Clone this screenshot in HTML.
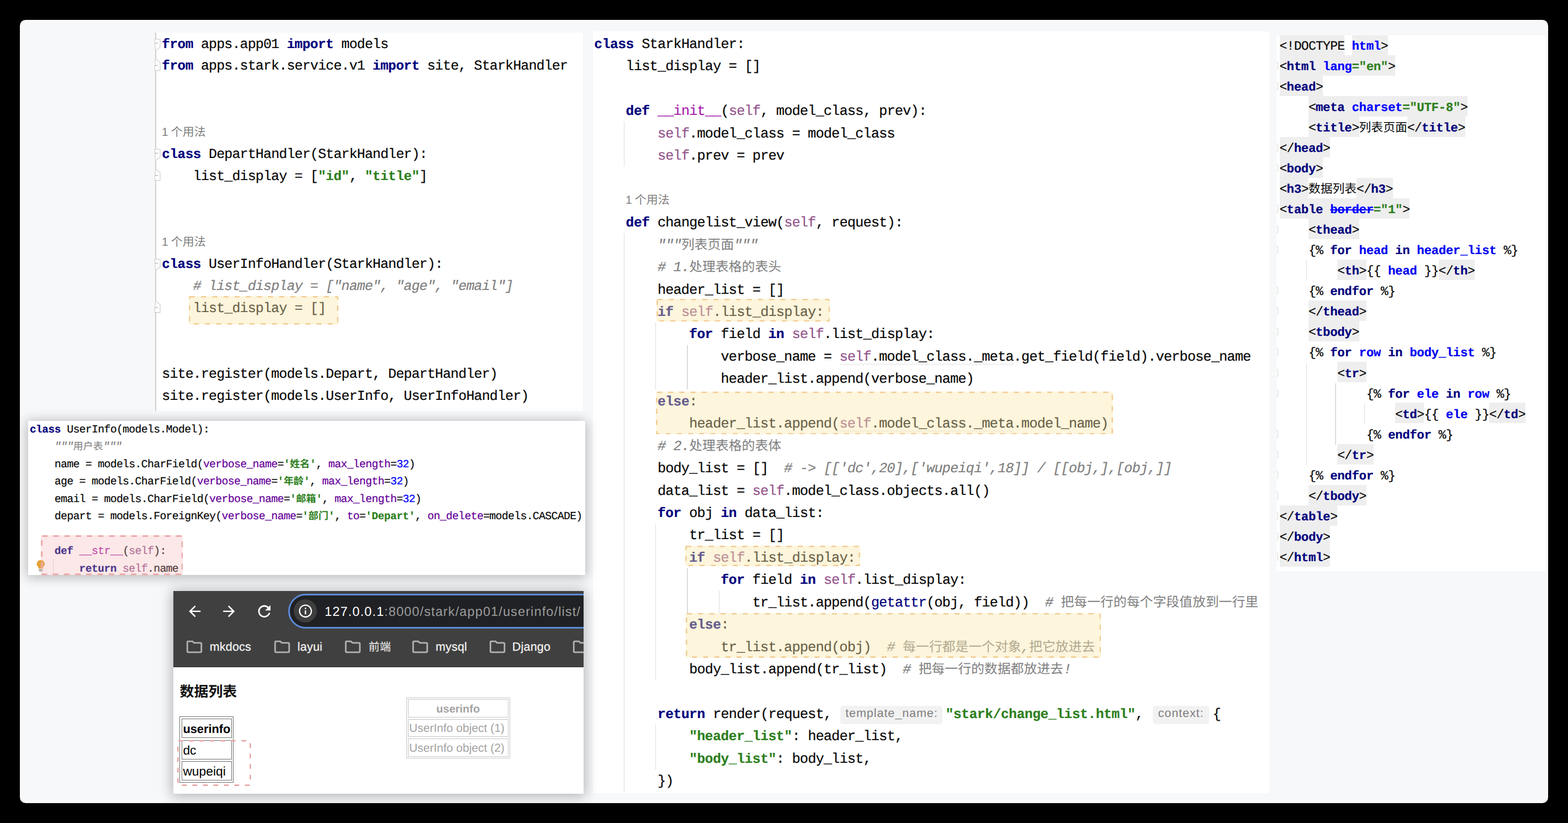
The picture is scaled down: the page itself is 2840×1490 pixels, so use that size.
<!DOCTYPE html>
<html lang="en"><head><meta charset="utf-8"><title>stark</title>
<style>
html,body{margin:0;padding:0;font-family:"Liberation Sans",sans-serif}
*{text-rendering:geometricPrecision}
body{width:2840px;height:1490px;background:#000;position:relative;overflow:hidden;font-family:"Liberation Mono",monospace}
.ln{position:absolute;white-space:pre;color:#080808;font-family:"Liberation Mono",monospace;-webkit-text-stroke:0.22px}
.cj{display:inline-block;position:relative;letter-spacing:0;text-align:center;font-style:normal;font-weight:normal;overflow:visible;white-space:nowrap;vertical-align:baseline;height:1em;line-height:1em;font-family:"Liberation Sans","Noto Sans CJK SC",sans-serif;-webkit-text-stroke:0}
.cjb{font-weight:bold}
.k{color:#00007c;font-weight:bold}
.s{color:#2d7f1d;font-weight:bold}
.c{color:#808080;font-style:italic}
.sf{color:#94558d}
.m{color:#a81eae}
.b{color:#00007c}
.pa{color:#660099}
.n{color:#0000ff}
.t{color:#00007c;font-weight:bold}
.a{color:#0000ff;font-weight:bold}
.v{color:#2d7f1d;font-weight:bold}
.dk{color:#00007c;font-weight:bold}
.dv{color:#0000f0;font-weight:bold}
.st{text-decoration:line-through}
.gb{position:absolute;background:#eeeeee}
.wv{text-decoration:underline wavy #d8d8d8 1px;text-underline-offset:4px}
.hint{position:absolute;white-space:nowrap;color:#7f7f7f;font-family:"Liberation Sans","Noto Sans CJK SC",sans-serif;line-height:30px;height:30px}
.hint span{display:inline-block}
.hint .hs{width:0.24em}
.hint .hc{width:1.0em;text-align:center}
.inl{display:inline-block;box-sizing:border-box;font-family:"Liberation Sans",sans-serif;font-size:21.5px;letter-spacing:0.95px;color:#7e7e7e;background:#f2f2f2;border-radius:5px;height:33px;line-height:33px;text-align:center;margin:0 7px 0 4px;vertical-align:baseline;position:relative;top:1px;-webkit-text-stroke:0}
.p1{font-size:25.0px;letter-spacing:-0.872px;line-height:40px;height:40px}
.p1 .a,.p1 .dk,.p1 .dv,.p1 .k,.p1 .s,.p1 .t,.p1 .v{font-size:24.3px;letter-spacing:-0.452px}
.p1 .cj{width:23.4px;font-size:23.4px}
.p2{font-size:25.4px;letter-spacing:-0.912px;line-height:40px;height:40px}
.p2 .a,.p2 .dk,.p2 .dv,.p2 .k,.p2 .s,.p2 .t,.p2 .v{font-size:24.69px;letter-spacing:-0.486px}
.p2 .cj{width:23.85px;font-size:23.85px}
.p3{font-size:23.1px;letter-spacing:-0.762px;line-height:37px;height:37px}
.p3 .a,.p3 .dk,.p3 .dv,.p3 .k,.p3 .s,.p3 .t,.p3 .v{font-size:22.45px;letter-spacing:-0.372px}
.p3 .cj{width:21.8px;font-size:21.8px}
.p4{font-size:19.9px;letter-spacing:-0.722px;line-height:32px;height:32px}
.p4 .a,.p4 .dk,.p4 .dv,.p4 .k,.p4 .s,.p4 .t,.p4 .v{font-size:19.34px;letter-spacing:-0.386px}
.p4 .cj{width:18.1px;font-size:18.1px}
</style></head>
<body>
<div style="position:absolute;left:36.00px;top:36.00px;width:2768.00px;height:1417.80px;background:#f7f8fa;border-radius:10.5px"></div>
<div style="position:absolute;left:280.50px;top:59.20px;width:775.30px;height:685.20px;background:#fff"></div>
<div style="position:absolute;left:281.20px;top:59.20px;width:1.80px;height:685.20px;background:#cfcfcf"></div>
<div class="ln p1" style="left:293.30px;top:60.56px"><span class="k">from</span> apps.app01 <span class="k">import</span> models</div>
<div class="ln p1" style="left:293.30px;top:100.40px"><span class="k">from</span> apps.stark.service.v1 <span class="k">import</span> site, StarkHandler</div>
<div class="ln p1" style="left:293.30px;top:259.76px"><span class="k">class</span> DepartHandler(StarkHandler):</div>
<div class="ln p1" style="left:293.30px;top:299.60px">    list_display = [<span class="s">"id"</span>, <span class="s">"title"</span>]</div>
<div class="ln p1" style="left:293.30px;top:458.96px"><span class="k">class</span> UserInfoHandler(StarkHandler):</div>
<div class="ln p1" style="left:293.30px;top:498.80px">    <span class="c"># list_display = ["name", "age", "email"]</span></div>
<div class="ln p1" style="left:293.30px;top:538.64px">    list_display = []</div>
<div class="ln p1" style="left:293.30px;top:658.16px">site.register(models.Depart, DepartHandler)</div>
<div class="ln p1" style="left:293.30px;top:698.00px">site.register(models.UserInfo, UserInfoHandler)</div>
<div class="hint" style="left:293.00px;top:224.50px;font-size:21px"><span>1</span><span class="hs"></span><span class="hc cj cjs">个</span><span class="hc cj cjs">用</span><span class="hc cj cjs">法</span></div>
<div class="hint" style="left:293.00px;top:423.50px;font-size:21px"><span>1</span><span class="hs"></span><span class="hc cj cjs">个</span><span class="hc cj cjs">用</span><span class="hc cj cjs">法</span></div>
<svg style="position:absolute;left:0;top:0;z-index:2" width="300" height="760" viewBox="0 0 300 760"><path d="M280.10 70.96 H290.00 V84.66 L281.60 92.36 Z" fill="#fff" stroke="#d2d2d2" stroke-width="1.3"/><path d="M280.60 78.16 H286.20" stroke="#b9b9b9" stroke-width="1.4"/></svg>
<svg style="position:absolute;left:0;top:0;z-index:2" width="300" height="760" viewBox="0 0 300 760"><path d="M280.10 270.16 H290.00 V283.86 L281.60 291.56 Z" fill="#fff" stroke="#d2d2d2" stroke-width="1.3"/><path d="M280.60 277.36 H286.20" stroke="#b9b9b9" stroke-width="1.4"/></svg>
<svg style="position:absolute;left:0;top:0;z-index:2" width="300" height="760" viewBox="0 0 300 760"><path d="M280.10 469.36 H290.00 V483.06 L281.60 490.76 Z" fill="#fff" stroke="#d2d2d2" stroke-width="1.3"/><path d="M280.60 476.56 H286.20" stroke="#b9b9b9" stroke-width="1.4"/></svg>
<svg style="position:absolute;left:0;top:0;z-index:2" width="300" height="760" viewBox="0 0 300 760"><path d="M281.60 106.00 L290.00 113.50 V127.50 H280.10 Z" fill="#fff" stroke="#d2d2d2" stroke-width="1.3"/><path d="M280.60 118.50 H286.20" stroke="#b9b9b9" stroke-width="1.4"/></svg>
<svg style="position:absolute;left:0;top:0;z-index:2" width="300" height="760" viewBox="0 0 300 760"><path d="M281.60 305.20 L290.00 312.70 V326.70 H280.10 Z" fill="#fff" stroke="#d2d2d2" stroke-width="1.3"/><path d="M280.60 317.70 H286.20" stroke="#b9b9b9" stroke-width="1.4"/></svg>
<svg style="position:absolute;left:0;top:0;z-index:2" width="300" height="760" viewBox="0 0 300 760"><path d="M281.60 544.24 L290.00 551.74 V565.74 H280.10 Z" fill="#fff" stroke="#d2d2d2" stroke-width="1.3"/><path d="M280.60 556.74 H286.20" stroke="#b9b9b9" stroke-width="1.4"/></svg>
<svg style="position:absolute;left:342.00px;top:536.00px;z-index:5" width="271.00" height="51.50" viewBox="0 0 271.00 51.50"><rect x="0" y="0" width="271.00" height="51.50" fill="rgba(250,230,168,0.40)"/><rect x="1.30" y="1.30" width="268.40" height="48.90" rx="2" fill="none" stroke="#f1cd93" stroke-width="2.6" stroke-dasharray="6.8 13.4" stroke-linecap="round"/></svg>
<div style="position:absolute;left:1073.60px;top:57.40px;width:1225.40px;height:1378.50px;background:#fff"></div>
<div class="ln p2" style="left:1076.30px;top:60.75px"><span class="k">class</span> StarkHandler:</div>
<div class="ln p2" style="left:1076.30px;top:101.19px">    list_display = []</div>
<div class="ln p2" style="left:1076.30px;top:182.07px">    <span class="k">def</span> <span class="m">__init__</span>(<span class="sf">self</span>, model_class, prev):</div>
<div class="ln p2" style="left:1076.30px;top:222.51px">        <span class="sf">self</span>.model_class = model_class</div>
<div class="ln p2" style="left:1076.30px;top:262.95px">        <span class="sf">self</span>.prev = prev</div>
<div class="ln p2" style="left:1076.30px;top:384.27px">    <span class="k">def</span> changelist_view(<span class="sf">self</span>, request):</div>
<div class="ln p2" style="left:1076.30px;top:424.71px">        <span class="c">"""<span class="cj">列</span><span class="cj">表</span><span class="cj">页</span><span class="cj">面</span>"""</span></div>
<div class="ln p2" style="left:1076.30px;top:465.15px">        <span class="c"># 1.<span class="cj">处</span><span class="cj">理</span><span class="cj">表</span><span class="cj">格</span><span class="cj">的</span><span class="cj">表</span><span class="cj">头</span></span></div>
<div class="ln p2" style="left:1076.30px;top:505.59px">        header_list = []</div>
<div class="ln p2" style="left:1076.30px;top:546.03px">        <span class="k">if</span> <span class="sf">self</span>.list_display:</div>
<div class="ln p2" style="left:1076.30px;top:586.47px">            <span class="k">for</span> field <span class="k">in</span> <span class="sf">self</span>.list_display:</div>
<div class="ln p2" style="left:1076.30px;top:626.91px">                verbose_name = <span class="sf wv">self</span><span class="wv">.model_class._meta</span>.get_field(field).verbose_name</div>
<div class="ln p2" style="left:1076.30px;top:667.35px">                header_list.append(verbose_name)</div>
<div class="ln p2" style="left:1076.30px;top:707.79px">        <span class="k">else</span>:</div>
<div class="ln p2" style="left:1076.30px;top:748.23px">            header_list.append(<span class="sf wv">self</span><span class="wv">.model_class._meta</span>.model_name)</div>
<div class="ln p2" style="left:1076.30px;top:788.67px">        <span class="c"># 2.<span class="cj">处</span><span class="cj">理</span><span class="cj">表</span><span class="cj">格</span><span class="cj">的</span><span class="cj">表</span><span class="cj">体</span></span></div>
<div class="ln p2" style="left:1076.30px;top:829.11px">        body_list = []  <span class="c"># -&gt; [['dc',20],['wupeiqi',18]] / [[obj,],[obj,]]</span></div>
<div class="ln p2" style="left:1076.30px;top:869.55px">        data_list = <span class="sf">self</span>.model_class.objects.all()</div>
<div class="ln p2" style="left:1076.30px;top:909.99px">        <span class="k">for</span> obj <span class="k">in</span> data_list:</div>
<div class="ln p2" style="left:1076.30px;top:950.43px">            tr_list = []</div>
<div class="ln p2" style="left:1076.30px;top:990.87px">            <span class="k">if</span> <span class="sf">self</span>.list_display:</div>
<div class="ln p2" style="left:1076.30px;top:1031.31px">                <span class="k">for</span> field <span class="k">in</span> <span class="sf">self</span>.list_display:</div>
<div class="ln p2" style="left:1076.30px;top:1071.75px">                    tr_list.append(<span class="b">getattr</span>(obj, field))  <span class="c"># <span class="cj">把</span><span class="cj">每</span><span class="cj">一</span><span class="cj">行</span><span class="cj">的</span><span class="cj">每</span><span class="cj">个</span><span class="cj">字</span><span class="cj">段</span><span class="cj">值</span><span class="cj">放</span><span class="cj">到</span><span class="cj">一</span><span class="cj">行</span><span class="cj">里</span></span></div>
<div class="ln p2" style="left:1076.30px;top:1112.19px">            <span class="k">else</span>:</div>
<div class="ln p2" style="left:1076.30px;top:1152.63px">                tr_list.append(obj)  <span class="c"># <span class="cj">每</span><span class="cj">一</span><span class="cj">行</span><span class="cj">都</span><span class="cj">是</span><span class="cj">一</span><span class="cj">个</span><span class="cj">对</span><span class="cj">象</span>,<span class="cj">把</span><span class="cj">它</span><span class="cj">放</span><span class="cj">进</span><span class="cj">去</span></span></div>
<div class="ln p2" style="left:1076.30px;top:1193.07px">            body_list.append(tr_list)  <span class="c"># <span class="cj">把</span><span class="cj">每</span><span class="cj">一</span><span class="cj">行</span><span class="cj">的</span><span class="cj">数</span><span class="cj">据</span><span class="cj">都</span><span class="cj">放</span><span class="cj">进</span><span class="cj">去</span>!</span></div>
<div class="ln p2" style="left:1076.30px;top:1273.95px">        <span class="k">return</span> render(request, <span class="inl" style="width:185px;margin:0 5px 0 2px"><span style="position:relative;top:-2.6px">template_name:</span></span><span class="s">"stark/change_list.html"</span>, <span class="inl" style="width:102px;margin:0 6.5px 0 3px"><span style="position:relative;top:-2.6px">context:</span></span>{</div>
<div class="ln p2" style="left:1076.30px;top:1314.39px">            <span class="s">"header_list"</span>: header_list,</div>
<div class="ln p2" style="left:1076.30px;top:1354.83px">            <span class="s">"body_list"</span>: body_list,</div>
<div class="ln p2" style="left:1076.30px;top:1395.27px">        })</div>
<div class="hint" style="left:1133.00px;top:348.00px;font-size:21px"><span>1</span><span class="hs"></span><span class="hc cj cjs">个</span><span class="hc cj cjs">用</span><span class="hc cj cjs">法</span></div>
<div style="position:absolute;left:1129.72px;top:220.20px;width:1.30px;height:80.88px;background:#dcdcdc"></div>
<div style="position:absolute;left:1129.72px;top:422.40px;width:1.30px;height:1011.00px;background:#dcdcdc"></div>
<div style="position:absolute;left:1187.04px;top:584.16px;width:1.30px;height:121.32px;background:#dcdcdc"></div>
<div style="position:absolute;left:1244.36px;top:624.60px;width:1.30px;height:80.88px;background:#dcdcdc"></div>
<div style="position:absolute;left:1187.04px;top:948.12px;width:1.30px;height:283.08px;background:#dcdcdc"></div>
<div style="position:absolute;left:1244.36px;top:1029.00px;width:1.30px;height:80.88px;background:#dcdcdc"></div>
<div style="position:absolute;left:1301.68px;top:1069.44px;width:1.30px;height:40.44px;background:#dcdcdc"></div>
<div style="position:absolute;left:1187.04px;top:1312.08px;width:1.30px;height:80.88px;background:#dcdcdc"></div>
<svg style="position:absolute;left:1189.00px;top:541.00px;z-index:5" width="314.40" height="41.40" viewBox="0 0 314.40 41.40"><rect x="0" y="0" width="314.40" height="41.40" fill="rgba(250,230,168,0.40)"/><rect x="1.30" y="1.30" width="311.80" height="38.80" rx="2" fill="none" stroke="#f1cd93" stroke-width="2.6" stroke-dasharray="6.8 13.4" stroke-linecap="round"/></svg>
<svg style="position:absolute;left:1188.40px;top:708.90px;z-index:5" width="827.90" height="77.60" viewBox="0 0 827.90 77.60"><rect x="0" y="0" width="827.90" height="77.60" fill="rgba(250,230,168,0.40)"/><rect x="1.30" y="1.30" width="825.30" height="75.00" rx="2" fill="none" stroke="#f1cd93" stroke-width="2.6" stroke-dasharray="6.8 13.4" stroke-linecap="round"/></svg>
<svg style="position:absolute;left:1241.40px;top:988.00px;z-index:5" width="317.00" height="37.00" viewBox="0 0 317.00 37.00"><rect x="0" y="0" width="317.00" height="37.00" fill="rgba(250,230,168,0.40)"/><rect x="1.30" y="1.30" width="314.40" height="34.40" rx="2" fill="none" stroke="#f1cd93" stroke-width="2.6" stroke-dasharray="6.8 13.4" stroke-linecap="round"/></svg>
<svg style="position:absolute;left:1242.00px;top:1110.00px;z-index:5" width="752.30" height="80.90" viewBox="0 0 752.30 80.90"><rect x="0" y="0" width="752.30" height="80.90" fill="rgba(250,230,168,0.40)"/><rect x="1.30" y="1.30" width="749.70" height="78.30" rx="2" fill="none" stroke="#f1cd93" stroke-width="2.6" stroke-dasharray="6.8 13.4" stroke-linecap="round"/></svg>
<div style="position:absolute;left:2312.00px;top:64.00px;width:487.00px;height:970.20px;background:#fff"></div>
<div style="position:absolute;left:2311.00px;top:54.00px;width:489.00px;height:10.00px;background:#f7f8fa;z-index:3"></div>
<div class="gb" style="left:2317.50px;top:62.50px;width:117.90px;height:37.10px"></div><div class="gb" style="left:2448.50px;top:62.50px;width:65.50px;height:37.10px"></div><div class="ln p3" style="left:2317.50px;top:65.70px">&lt;!DOCTYPE <span class="a">html</span>&gt;</div>
<div class="gb" style="left:2317.50px;top:99.55px;width:209.60px;height:37.10px"></div><div class="ln p3" style="left:2317.50px;top:102.75px">&lt;<span class="t">html</span> <span class="a">lang</span><span class="v">="en"</span>&gt;</div>
<div class="gb" style="left:2317.50px;top:136.60px;width:78.60px;height:37.10px"></div><div class="ln p3" style="left:2317.50px;top:139.80px">&lt;<span class="t">head</span>&gt;</div>
<div class="gb" style="left:2369.90px;top:173.65px;width:288.20px;height:37.10px"></div><div class="ln p3" style="left:2317.50px;top:176.85px">    &lt;<span class="t">meta</span> <span class="a">charset</span><span class="v">="UTF-8"</span>&gt;</div>
<div class="gb" style="left:2369.90px;top:210.70px;width:91.70px;height:37.10px"></div><div class="gb" style="left:2548.80px;top:210.70px;width:104.80px;height:37.10px"></div><div class="ln p3" style="left:2317.50px;top:213.90px">    &lt;<span class="t">title</span>&gt;<span class="cj">列</span><span class="cj">表</span><span class="cj">页</span><span class="cj">面</span>&lt;/<span class="t">title</span>&gt;</div>
<div class="gb" style="left:2317.50px;top:247.75px;width:91.70px;height:37.10px"></div><div class="ln p3" style="left:2317.50px;top:250.95px">&lt;/<span class="t">head</span>&gt;</div>
<div class="gb" style="left:2317.50px;top:284.80px;width:78.60px;height:37.10px"></div><div class="ln p3" style="left:2317.50px;top:288.00px">&lt;<span class="t">body</span>&gt;</div>
<div class="gb" style="left:2317.50px;top:321.85px;width:52.40px;height:37.10px"></div><div class="gb" style="left:2457.10px;top:321.85px;width:65.50px;height:37.10px"></div><div class="ln p3" style="left:2317.50px;top:325.05px">&lt;<span class="t">h3</span>&gt;<span class="cj">数</span><span class="cj">据</span><span class="cj">列</span><span class="cj">表</span>&lt;/<span class="t">h3</span>&gt;</div>
<div class="gb" style="left:2317.50px;top:358.90px;width:235.80px;height:37.10px"></div><div class="ln p3" style="left:2317.50px;top:362.10px">&lt;<span class="t">table</span> <span class="a st">border</span><span class="v">="1"</span>&gt;</div>
<div class="gb" style="left:2369.90px;top:395.95px;width:91.70px;height:37.10px"></div><div class="ln p3" style="left:2317.50px;top:399.15px">    &lt;<span class="t">thead</span>&gt;</div>
<div class="ln p3" style="left:2317.50px;top:436.20px">    {% <span class="dk">for</span> <span class="dv">head</span> <span class="dk">in</span> <span class="dv">header_list</span> %}</div>
<div class="gb" style="left:2422.30px;top:470.05px;width:52.40px;height:37.10px"></div><div class="gb" style="left:2605.70px;top:470.05px;width:65.50px;height:37.10px"></div><div class="ln p3" style="left:2317.50px;top:473.25px">        &lt;<span class="t">th</span>&gt;{{ <span class="dv">head</span> }}&lt;/<span class="t">th</span>&gt;</div>
<div class="ln p3" style="left:2317.50px;top:510.30px">    {% <span class="dk">endfor</span> %}</div>
<div class="gb" style="left:2369.90px;top:544.15px;width:104.80px;height:37.10px"></div><div class="ln p3" style="left:2317.50px;top:547.35px">    &lt;/<span class="t">thead</span>&gt;</div>
<div class="gb" style="left:2369.90px;top:581.20px;width:91.70px;height:37.10px"></div><div class="ln p3" style="left:2317.50px;top:584.40px">    &lt;<span class="t">tbody</span>&gt;</div>
<div class="ln p3" style="left:2317.50px;top:621.45px">    {% <span class="dk">for</span> <span class="dv">row</span> <span class="dk">in</span> <span class="dv">body_list</span> %}</div>
<div class="gb" style="left:2422.30px;top:655.30px;width:52.40px;height:37.10px"></div><div class="ln p3" style="left:2317.50px;top:658.50px">        &lt;<span class="t">tr</span>&gt;</div>
<div class="ln p3" style="left:2317.50px;top:695.55px">            {% <span class="dk">for</span> <span class="dv">ele</span> <span class="dk">in</span> <span class="dv">row</span> %}</div>
<div class="gb" style="left:2527.10px;top:729.40px;width:52.40px;height:37.10px"></div><div class="gb" style="left:2697.40px;top:729.40px;width:65.50px;height:37.10px"></div><div class="ln p3" style="left:2317.50px;top:732.60px">                &lt;<span class="t">td</span>&gt;{{ <span class="dv">ele</span> }}&lt;/<span class="t">td</span>&gt;</div>
<div class="ln p3" style="left:2317.50px;top:769.65px">            {% <span class="dk">endfor</span> %}</div>
<div class="gb" style="left:2422.30px;top:803.50px;width:65.50px;height:37.10px"></div><div class="ln p3" style="left:2317.50px;top:806.70px">        &lt;/<span class="t">tr</span>&gt;</div>
<div class="ln p3" style="left:2317.50px;top:843.75px">    {% <span class="dk">endfor</span> %}</div>
<div class="gb" style="left:2369.90px;top:877.60px;width:104.80px;height:37.10px"></div><div class="ln p3" style="left:2317.50px;top:880.80px">    &lt;/<span class="t">tbody</span>&gt;</div>
<div class="gb" style="left:2317.50px;top:914.65px;width:104.80px;height:37.10px"></div><div class="ln p3" style="left:2317.50px;top:917.85px">&lt;/<span class="t">table</span>&gt;</div>
<div class="gb" style="left:2317.50px;top:951.70px;width:91.70px;height:37.10px"></div><div class="ln p3" style="left:2317.50px;top:954.90px">&lt;/<span class="t">body</span>&gt;</div>
<div class="gb" style="left:2317.50px;top:988.75px;width:91.70px;height:37.10px"></div><div class="ln p3" style="left:2317.50px;top:991.95px">&lt;/<span class="t">html</span>&gt;</div>
<div style="position:absolute;left:2311.60px;top:111.75px;width:3.20px;height:14.00px;box-sizing:border-box;border:1.3px solid #d6d6d6;border-left:none;border-radius:0 3px 3px 0"></div>
<div style="position:absolute;left:2311.60px;top:148.80px;width:3.20px;height:14.00px;box-sizing:border-box;border:1.3px solid #d6d6d6;border-left:none;border-radius:0 3px 3px 0"></div>
<div style="position:absolute;left:2311.60px;top:259.95px;width:3.20px;height:14.00px;box-sizing:border-box;border:1.3px solid #d6d6d6;border-left:none;border-radius:0 3px 3px 0"></div>
<div style="position:absolute;left:2311.60px;top:297.00px;width:3.20px;height:14.00px;box-sizing:border-box;border:1.3px solid #d6d6d6;border-left:none;border-radius:0 3px 3px 0"></div>
<div style="position:absolute;left:2311.60px;top:371.10px;width:3.20px;height:14.00px;box-sizing:border-box;border:1.3px solid #d6d6d6;border-left:none;border-radius:0 3px 3px 0"></div>
<div style="position:absolute;left:2311.60px;top:408.15px;width:3.20px;height:14.00px;box-sizing:border-box;border:1.3px solid #d6d6d6;border-left:none;border-radius:0 3px 3px 0"></div>
<div style="position:absolute;left:2311.60px;top:445.20px;width:3.20px;height:14.00px;box-sizing:border-box;border:1.3px solid #d6d6d6;border-left:none;border-radius:0 3px 3px 0"></div>
<div style="position:absolute;left:2311.60px;top:519.30px;width:3.20px;height:14.00px;box-sizing:border-box;border:1.3px solid #d6d6d6;border-left:none;border-radius:0 3px 3px 0"></div>
<div style="position:absolute;left:2311.60px;top:556.35px;width:3.20px;height:14.00px;box-sizing:border-box;border:1.3px solid #d6d6d6;border-left:none;border-radius:0 3px 3px 0"></div>
<div style="position:absolute;left:2311.60px;top:593.40px;width:3.20px;height:14.00px;box-sizing:border-box;border:1.3px solid #d6d6d6;border-left:none;border-radius:0 3px 3px 0"></div>
<div style="position:absolute;left:2311.60px;top:630.45px;width:3.20px;height:14.00px;box-sizing:border-box;border:1.3px solid #d6d6d6;border-left:none;border-radius:0 3px 3px 0"></div>
<div style="position:absolute;left:2311.60px;top:667.50px;width:3.20px;height:14.00px;box-sizing:border-box;border:1.3px solid #d6d6d6;border-left:none;border-radius:0 3px 3px 0"></div>
<div style="position:absolute;left:2311.60px;top:704.55px;width:3.20px;height:14.00px;box-sizing:border-box;border:1.3px solid #d6d6d6;border-left:none;border-radius:0 3px 3px 0"></div>
<div style="position:absolute;left:2311.60px;top:778.65px;width:3.20px;height:14.00px;box-sizing:border-box;border:1.3px solid #d6d6d6;border-left:none;border-radius:0 3px 3px 0"></div>
<div style="position:absolute;left:2311.60px;top:815.70px;width:3.20px;height:14.00px;box-sizing:border-box;border:1.3px solid #d6d6d6;border-left:none;border-radius:0 3px 3px 0"></div>
<div style="position:absolute;left:2311.60px;top:852.75px;width:3.20px;height:14.00px;box-sizing:border-box;border:1.3px solid #d6d6d6;border-left:none;border-radius:0 3px 3px 0"></div>
<div style="position:absolute;left:2311.60px;top:889.80px;width:3.20px;height:14.00px;box-sizing:border-box;border:1.3px solid #d6d6d6;border-left:none;border-radius:0 3px 3px 0"></div>
<div style="position:absolute;left:2311.60px;top:926.85px;width:3.20px;height:14.00px;box-sizing:border-box;border:1.3px solid #d6d6d6;border-left:none;border-radius:0 3px 3px 0"></div>
<div style="position:absolute;left:2311.60px;top:963.90px;width:3.20px;height:14.00px;box-sizing:border-box;border:1.3px solid #d6d6d6;border-left:none;border-radius:0 3px 3px 0"></div>
<div style="position:absolute;left:2311.60px;top:1000.95px;width:3.20px;height:14.00px;box-sizing:border-box;border:1.3px solid #d6d6d6;border-left:none;border-radius:0 3px 3px 0"></div>
<div style="position:absolute;left:2365.90px;top:471.31px;width:1.30px;height:37.05px;background:#dcdcdc"></div>
<div style="position:absolute;left:2365.90px;top:656.57px;width:1.30px;height:185.25px;background:#dcdcdc"></div>
<div style="position:absolute;left:2418.30px;top:693.62px;width:1.30px;height:111.15px;background:#dcdcdc"></div>
<div style="position:absolute;left:2470.70px;top:730.67px;width:1.30px;height:37.05px;background:#dcdcdc"></div>
<div style="position:absolute;left:51.40px;top:761.50px;width:1008.60px;height:279.90px;background:#fff;box-shadow:0 2px 20px 2px rgba(0,0,0,0.27);z-index:3"></div>
<div class="ln p4" style="left:53.90px;top:761.70px;z-index:4"><span class="k">class</span> UserInfo(models.Model):</div>
<div class="ln p4" style="left:53.90px;top:793.23px;z-index:4">    <span class="c">"""<span class="cj">用</span><span class="cj">户</span><span class="cj">表</span>"""</span></div>
<div class="ln p4" style="left:53.90px;top:824.76px;z-index:4">    name = models.CharField(<span class="pa">verbose_name</span>=<span class="s">'<span class="cj cjb">姓</span><span class="cj cjb">名</span>'</span>, <span class="pa">max_length</span>=<span class="n">32</span>)</div>
<div class="ln p4" style="left:53.90px;top:856.29px;z-index:4">    age = models.CharField(<span class="pa">verbose_name</span>=<span class="s">'<span class="cj cjb">年</span><span class="cj cjb">龄</span>'</span>, <span class="pa">max_length</span>=<span class="n">32</span>)</div>
<div class="ln p4" style="left:53.90px;top:887.82px;z-index:4">    email = models.CharField(<span class="pa">verbose_name</span>=<span class="s">'<span class="cj cjb">邮</span><span class="cj cjb">箱</span>'</span>, <span class="pa">max_length</span>=<span class="n">32</span>)</div>
<div class="ln p4" style="left:53.90px;top:919.35px;z-index:4">    depart = models.ForeignKey(<span class="pa">verbose_name</span>=<span class="s">'<span class="cj cjb">部</span><span class="cj cjb">门</span>'</span>, <span class="pa">to</span>=<span class="s">'Depart'</span>, <span class="pa">on_delete</span>=models.CASCADE)</div>
<div class="ln p4" style="left:53.90px;top:982.41px;z-index:4">    <span class="k">def</span> <span class="m">__str__</span>(<span class="sf">self</span>):</div>
<div class="ln p4" style="left:53.90px;top:1013.94px;z-index:4">        <span class="k">return</span> <span class="sf">self</span>.name</div>
<svg style="position:absolute;left:62px;top:1010px;z-index:5" width="24" height="28" viewBox="0 0 24 28"><path d="M11.8 4 a7.2 7.2 0 0 1 4.3 13 v2.2 h-8.6 v-2.2 a7.2 7.2 0 0 1 4.3 -13z" fill="#e6a236"/><path d="M8.2 21.2h7.2M8.8 23.6h6" stroke="#6e6e6e" stroke-width="1.3"/></svg>
<div style="position:absolute;left:96.20px;top:1012.00px;width:1.20px;height:29.50px;background:#d8d8d8;z-index:4"></div>
<svg style="position:absolute;left:73.50px;top:969.30px;z-index:6" width="257.80" height="72.30" viewBox="0 0 257.80 72.30"><rect x="0" y="0" width="257.80" height="72.30" fill="rgba(245,178,178,0.30)"/><rect x="1.55" y="1.55" width="254.70" height="69.20" rx="2" fill="none" stroke="#ecaaaa" stroke-width="3.1" stroke-dasharray="7.6 12.6" stroke-linecap="round"/></svg>
<div style="position:absolute;left:314px;top:1070px;width:743px;height:367px;background:#fff;overflow:hidden;z-index:3;box-shadow:0 2px 22px 3px rgba(0,0,0,0.28)"><div style="position:absolute;left:0;top:0;width:743px;height:136.6px;background:#404040;border-bottom:1.6px solid #2e2e2e"></div><svg style="position:absolute;left:22.75px;top:20.55px" width="31.5" height="31.5" viewBox="0 0 24 24"><path d="M20 11H7.83l5.59-5.59L12 4l-8 8 8 8 1.41-1.41L7.83 13H20v-2z" fill="#fff"/></svg><svg style="position:absolute;left:85.25px;top:20.55px" width="31.5" height="31.5" viewBox="0 0 24 24"><path d="M12 4l-1.41 1.41L16.17 11H4v2h12.17l-5.58 5.59L12 20l8-8z" fill="#fff"/></svg><svg style="position:absolute;left:148.05px;top:19.75px" width="33.5" height="33.5" viewBox="0 0 24 24"><path d="M17.65 6.35C16.2 4.9 14.21 4 12 4c-4.42 0-7.99 3.58-7.99 8s3.57 8 7.99 8c3.73 0 6.84-2.55 7.73-6h-2.08c-.82 2.33-3.04 4-5.65 4-3.31 0-6-2.69-6-6s2.69-6 6-6c1.66 0 3.14.69 4.22 1.78L13 11h7V4l-2.35 2.35z" fill="#fff"/></svg><div style="position:absolute;left:208.30px;top:4.90px;width:700px;height:63.3px;box-sizing:border-box;border:3.8px solid #5b8bd8;border-radius:32px;background:#202124"></div><div style="position:absolute;left:218.00px;top:15.30px;width:42px;height:42px;border-radius:50%;background:#3e3e3e"></div><svg style="position:absolute;left:224.75px;top:22.05px" width="28.5" height="28.5" viewBox="0 0 24 24"><path d="M11 7h2v2h-2zm0 4h2v6h-2zm1-9C6.48 2 2 6.48 2 12s4.48 10 10 10 10-4.48 10-10S17.52 2 12 2zm0 18c-4.41 0-8-3.59-8-8s3.59-8 8-8 8 3.59 8 8-3.59 8-8 8z" fill="#fff"/></svg><div style="position:absolute;left:274.00px;top:17.10px;height:40px;line-height:40px;font-family:'Liberation Sans',sans-serif;font-size:23.5px;letter-spacing:1.12px;white-space:pre;color:#fff">127.0.0.1<span style="color:#9c9c9c">:8000/stark/app01/userinfo/list/</span></div><svg style="position:absolute;left:21.20px;top:84.20px" width="34" height="34" viewBox="0 0 24 24"><path d="M9.17 6l2 2H20v10H4V6h5.17M10 4H4c-1.1 0-1.99.9-1.99 2L2 18c0 1.1.9 2 2 2h16c1.1 0 2-.9 2-2V8c0-1.1-.9-2-2-2h-8l-2-2z" fill="#b3b3b3"/></svg><div style="position:absolute;left:65.80px;top:86.00px;height:30px;line-height:30px;font-family:'Liberation Sans',sans-serif;font-size:21.4px;letter-spacing:0.25px;white-space:pre;color:#f1f1f1;-webkit-text-stroke:0.3px">mkdocs</div><svg style="position:absolute;left:180.20px;top:84.20px" width="34" height="34" viewBox="0 0 24 24"><path d="M9.17 6l2 2H20v10H4V6h5.17M10 4H4c-1.1 0-1.99.9-1.99 2L2 18c0 1.1.9 2 2 2h16c1.1 0 2-.9 2-2V8c0-1.1-.9-2-2-2h-8l-2-2z" fill="#b3b3b3"/></svg><div style="position:absolute;left:224.80px;top:86.00px;height:30px;line-height:30px;font-family:'Liberation Sans',sans-serif;font-size:21.4px;letter-spacing:0.25px;white-space:pre;color:#f1f1f1;-webkit-text-stroke:0.3px">layui</div><svg style="position:absolute;left:308.00px;top:84.20px" width="34" height="34" viewBox="0 0 24 24"><path d="M9.17 6l2 2H20v10H4V6h5.17M10 4H4c-1.1 0-1.99.9-1.99 2L2 18c0 1.1.9 2 2 2h16c1.1 0 2-.9 2-2V8c0-1.1-.9-2-2-2h-8l-2-2z" fill="#b3b3b3"/></svg><div style="position:absolute;left:353.60px;top:86.00px;height:30px;line-height:30px;font-family:'Liberation Sans','Noto Sans CJK SC',sans-serif;font-size:21.4px;letter-spacing:0.25px;white-space:pre;color:#f1f1f1;-webkit-text-stroke:0.3px"><span class="cj cjs" style="width:20.2px;font-size:20.2px">前</span><span class="cj cjs" style="width:20.2px;font-size:20.2px">端</span></div><svg style="position:absolute;left:430.30px;top:84.20px" width="34" height="34" viewBox="0 0 24 24"><path d="M9.17 6l2 2H20v10H4V6h5.17M10 4H4c-1.1 0-1.99.9-1.99 2L2 18c0 1.1.9 2 2 2h16c1.1 0 2-.9 2-2V8c0-1.1-.9-2-2-2h-8l-2-2z" fill="#b3b3b3"/></svg><div style="position:absolute;left:475.00px;top:86.00px;height:30px;line-height:30px;font-family:'Liberation Sans',sans-serif;font-size:21.4px;letter-spacing:0.25px;white-space:pre;color:#f1f1f1;-webkit-text-stroke:0.3px">mysql</div><svg style="position:absolute;left:570.20px;top:84.20px" width="34" height="34" viewBox="0 0 24 24"><path d="M9.17 6l2 2H20v10H4V6h5.17M10 4H4c-1.1 0-1.99.9-1.99 2L2 18c0 1.1.9 2 2 2h16c1.1 0 2-.9 2-2V8c0-1.1-.9-2-2-2h-8l-2-2z" fill="#b3b3b3"/></svg><div style="position:absolute;left:613.80px;top:86.00px;height:30px;line-height:30px;font-family:'Liberation Sans',sans-serif;font-size:21.4px;letter-spacing:0.25px;white-space:pre;color:#f1f1f1;-webkit-text-stroke:0.3px">Django</div><svg style="position:absolute;left:721.20px;top:84.20px" width="34" height="34" viewBox="0 0 24 24"><path d="M9.17 6l2 2H20v10H4V6h5.17M10 4H4c-1.1 0-1.99.9-1.99 2L2 18c0 1.1.9 2 2 2h16c1.1 0 2-.9 2-2V8c0-1.1-.9-2-2-2h-8l-2-2z" fill="#b3b3b3"/></svg><div style="position:absolute;left:11.60px;top:165.00px;height:36px;line-height:36px;font-family:'Liberation Sans','Noto Sans CJK SC',sans-serif;font-weight:bold;font-size:25.8px;color:#111;white-space:nowrap"><span class="cj cjs cjb" style="width:25.9px;font-size:25.9px">数</span><span class="cj cjs cjb" style="width:25.9px;font-size:25.9px">据</span><span class="cj cjs cjb" style="width:25.9px;font-size:25.9px">列</span><span class="cj cjs cjb" style="width:25.9px;font-size:25.9px">表</span></div><div style="position:absolute;left:11.20px;top:227.30px;width:97.80px;height:119.30px;box-sizing:border-box;border:1.3px solid #6d6d6d"></div><div style="position:absolute;left:14.80px;top:231.30px;width:90.80px;height:34.90px;box-sizing:border-box;border:1.3px solid #6d6d6d;font-family:'Liberation Sans',sans-serif;font-size:21.8px;color:#000;white-space:nowrap;line-height:32.30px;padding-left:1.6px;padding-top:1.5px;letter-spacing:0px;font-weight:bold">userinfo</div><div style="position:absolute;left:14.80px;top:269.80px;width:90.80px;height:34.90px;box-sizing:border-box;border:1.3px solid #6d6d6d;font-family:'Liberation Sans',sans-serif;font-size:22.8px;color:#000;white-space:nowrap;line-height:32.30px;padding-left:1.6px;padding-top:1.5px;letter-spacing:0px">dc</div><div style="position:absolute;left:14.80px;top:307.80px;width:90.80px;height:35.50px;box-sizing:border-box;border:1.3px solid #6d6d6d;font-family:'Liberation Sans',sans-serif;font-size:22.8px;color:#000;white-space:nowrap;line-height:32.90px;padding-left:1.6px;padding-top:1.5px;letter-spacing:0px">wupeiqi</div><div style="position:absolute;left:421.50px;top:193.40px;width:188.80px;height:109.20px;box-sizing:border-box;border:1.2px solid #c4c4c4"></div><div style="position:absolute;left:424.50px;top:196.40px;width:182.50px;height:32.50px;box-sizing:border-box;border:1.2px solid #c4c4c4;font-family:'Liberation Sans',sans-serif;font-size:20px;color:#a3a3a3;white-space:nowrap;line-height:30.10px;padding-left:1.6px;padding-top:1.5px;letter-spacing:0px;font-weight:bold;text-align:center;padding-left:0">userinfo</div><div style="position:absolute;left:424.50px;top:231.90px;width:182.50px;height:32.50px;box-sizing:border-box;border:1.2px solid #c4c4c4;font-family:'Liberation Sans',sans-serif;font-size:21px;color:#a3a3a3;white-space:nowrap;line-height:30.10px;padding-left:1.6px;padding-top:1.5px;letter-spacing:0px">UserInfo object (1)</div><div style="position:absolute;left:424.50px;top:267.40px;width:182.50px;height:32.20px;box-sizing:border-box;border:1.2px solid #c4c4c4;font-family:'Liberation Sans',sans-serif;font-size:21px;color:#a3a3a3;white-space:nowrap;line-height:29.80px;padding-left:1.6px;padding-top:1.5px;letter-spacing:0px">UserInfo object (2)</div></div><svg style="position:absolute;left:321.20px;top:1340.40px;z-index:6" width="133.60" height="82.90" viewBox="0 0 133.60 82.90"><rect x="0" y="0" width="133.60" height="82.90" fill="none"/><rect x="1.30" y="1.30" width="131.00" height="80.30" rx="2" fill="none" stroke="#eaa5a5" stroke-width="2.6" stroke-dasharray="6.6 12.4" stroke-linecap="round"/></svg>
</body></html>
